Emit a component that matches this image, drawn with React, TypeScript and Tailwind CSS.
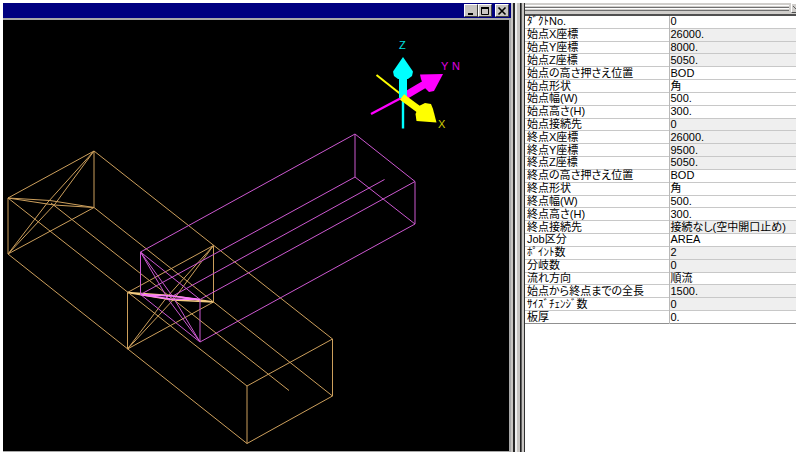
interface Property {
  label: string;
  value: string;
  readOnly?: boolean;
}

const properties: Property[] = [
  { label: 'ﾀﾞｸﾄNo.', value: '0' },
  { label: '始点X座標', value: '26000.', readOnly: true },
  { label: '始点Y座標', value: '8000.', readOnly: true },
  { label: '始点Z座標', value: '5050.', readOnly: true },
  { label: '始点の高さ押さえ位置', value: 'BOD' },
  { label: '始点形状', value: '角' },
  { label: '始点幅(W)', value: '500.' },
  { label: '始点高さ(H)', value: '300.' },
  { label: '始点接続先', value: '0', readOnly: true },
  { label: '終点X座標', value: '26000.', readOnly: true },
  { label: '終点Y座標', value: '9500.', readOnly: true },
  { label: '終点Z座標', value: '5050.', readOnly: true },
  { label: '終点の高さ押さえ位置', value: 'BOD' },
  { label: '終点形状', value: '角' },
  { label: '終点幅(W)', value: '500.' },
  { label: '終点高さ(H)', value: '300.' },
  { label: '終点接続先', value: '接続なし(空中開口止め)', readOnly: true },
  { label: 'Job区分', value: 'AREA' },
  { label: 'ﾎﾟｲﾝﾄ数', value: '2', readOnly: true },
  { label: '分岐数', value: '0', readOnly: true },
  { label: '流れ方向', value: '順流' },
  { label: '始点から終点までの全長', value: '1500.', readOnly: true },
  { label: 'ｻｲｽﾞﾁｪﾝｼﾞ数', value: '0', readOnly: true },
  { label: '板厚', value: '0.' },
];

const buttonClass =
  'flex h-[13px] w-[14px] items-center justify-center border border-t-white border-l-white border-r-[#404040] border-b-[#404040] bg-[#c8c5c2]';

function TitleBar() {
  return (
    <div className="flex h-[15px] shrink-0 items-center justify-end bg-[#000080] pr-[2px]">
      <button type="button" aria-label="Minimize" className={buttonClass}>
        <svg width="10" height="10" viewBox="0 0 10 10">
          <path d="M2 8h5" stroke="#000" strokeWidth="2" />
        </svg>
      </button>
      <button type="button" aria-label="Maximize" className={buttonClass}>
        <svg width="10" height="10" viewBox="0 0 10 10" fill="none" stroke="#000">
          <path d="M1.5 1.5h7v7h-7z" />
          <path d="M1 2h8" strokeWidth="2" />
        </svg>
      </button>
      <button type="button" aria-label="Close" className={`${buttonClass} ml-[3px]`}>
        <svg width="10" height="10" viewBox="0 0 10 10">
          <path d="M1.5 1.5l7 7M8.5 1.5l-7 7" stroke="#000" strokeWidth="1.6" />
        </svg>
      </button>
    </div>
  );
}

function DuctView() {
  return (
    <svg
      viewBox="3 20 506 431"
      className="min-h-0 w-full flex-1"
      role="img"
      aria-label="Duct wireframe"
      fontFamily="'Liberation Sans', sans-serif"
      fontSize="11"
    >
      {/* Main duct */}
      <g fill="none" stroke="#cc9f5c" strokeWidth="1">
        <path d="M94 151L8 198V254L94 207.500Z" />
        <path d="M94 151L48 202L8 254L55 204Z" />
        <path d="M8 198L50 200.500L94 207.500L54 205Z" />
        <path d="M213.500 245.500L127.500 292.500V349L213.500 302Z" />
        <path d="M213.500 245.500L167 297L127.500 349L174 299Z" />
        <path d="M127.500 292.500L170 295.500L213.500 302L173 300Z" stroke="#f4cc80" strokeWidth="1.300" />
        <path d="M332.500 339L247 386V443.500L332.500 396Z" />
        <path d="M94 151L332.500 339M94 207.500L332.500 396M8 198L247 386M8 254L247 443.500" />
        <path d="M51 203L289 390.500" />
      </g>

      {/* Branch duct */}
      <g fill="none" stroke="#cc58d0" strokeWidth="1">
        <path d="M140.500 252L200 299.500V342L140.500 294.500Z" />
        <path d="M140.500 252L168 299L200 342L173 297Z" />
        <path d="M140.500 294.500L170 299L200 299.500L172 296Z" stroke="#f878fc" strokeWidth="1.300" />
        <path d="M355 134L415 181.500V224L355 177Z" />
        <path d="M140.500 252L355 134M140.500 294.500L355 177M200 299.500L415 181.500M200 342L415 224" />
        <path d="M170 297.500L384.500 179.500" />
      </g>

      {/* Axis marker */}
      <path d="M376.500 75L403 96" stroke="#ff0" strokeWidth="2" />
      <path d="M371 114L403 97" stroke="#f0f" strokeWidth="2.400" />
      <path d="M403 96V128.500" stroke="#0ff" strokeWidth="2.400" />
      <path d="M403 97L425 84" stroke="#f0f" strokeWidth="7.500" />
      <path d="M443 74L420 74.500L421 79L424 87L429 92L434 91Z" fill="#f0f" />
      <path d="M403 98V72" stroke="#0ff" strokeWidth="8" />
      <path d="M403 57L413 71.500L412 76L408 79H398L394 76L393 71.500Z" fill="#0ff" />
      <path d="M402 97L421 111" stroke="#ff0" strokeWidth="7" />
      <path d="M436.500 122.500L416.500 121L415.500 114L419 106L425 103L431 104L433 109Z" fill="#ff0" />
      <text x="399" y="49" fill="#00e0e0">Z</text>
      <text x="441" y="70" fill="#e000e0">Y</text>
      <text x="452" y="70" fill="#e000e0">N</text>
      <text x="438" y="128" fill="#d0d000">X</text>
    </svg>
  );
}

function Splitter() {
  return (
    <div className="flex w-[14px] shrink-0">
      <div className="w-[2px] bg-[#c8c5c2]" />
      <div className="w-[2px] bg-[#282828]" />
      <div className="w-[2px] bg-[#f0f0f0]" />
      <div className="w-[3px] bg-[#c8c5c2]" />
      <div className="w-px bg-[#202020]" />
      <div className="w-px bg-[#606060]" />
      <div className="w-[2px] bg-[#c8c5c2]" />
      <div className="w-px bg-[#303030]" />
    </div>
  );
}

function PropertyPanel() {
  return (
    <div className="flex w-[271px] shrink-0 flex-col">
      <div className="flex h-[13px] shrink-0 items-start gap-[2px] border-b-2 border-[#505050] bg-[#d0cecb]">
        <div className="flex flex-1 flex-col pt-[2px]">
          <div className="h-[3px] border-t border-b border-t-white border-b-[#707070]" />
          <div className="h-[3px] border-t border-b border-t-white border-b-[#707070]" />
        </div>
        <button
          type="button"
          aria-label="Close panel"
          className="flex h-[10px] w-[5px] items-center overflow-hidden border-t border-b border-l border-t-white border-l-white border-b-[#505050]"
        >
          <svg width="4" height="7" viewBox="0 0 4 7" className="shrink-0">
            <path d="M1 1l3 3" stroke="#606060" />
          </svg>
        </button>
      </div>
      <table className="h-[308px] w-full table-fixed border-collapse text-left text-[11px] leading-[11px] text-black">
        <tbody>
          {properties.map((p) => (
            <tr key={p.label} className="border-b border-[#c8c8c8] last:border-[#909090]">
              <th
                scope="row"
                className="w-[144px] border-r border-[#b8b8b8] p-0 pl-[2px] font-normal whitespace-nowrap"
              >
                {p.label}
              </th>
              <td
                className={`p-0 pl-px whitespace-nowrap ${p.readOnly ? 'bg-[#efefef]' : 'bg-white'}`}
              >
                {p.value}
              </td>
            </tr>
          ))}
        </tbody>
      </table>
    </div>
  );
}

export default function App() {
  return (
    <main className="flex h-screen bg-white p-[3px] pr-[4px] pb-[2px] font-['Liberation_Sans','Noto_Sans_CJK_JP',sans-serif] [font-feature-settings:'palt']">
      <section className="flex min-w-0 flex-1 flex-col bg-[#000080]">
        <TitleBar />
        <div className="flex min-h-0 flex-1 flex-col border-t-2 border-r-2 border-b border-[#a8a8a8] bg-black">
          <DuctView />
        </div>
      </section>
      <Splitter />
      <PropertyPanel />
    </main>
  );
}
